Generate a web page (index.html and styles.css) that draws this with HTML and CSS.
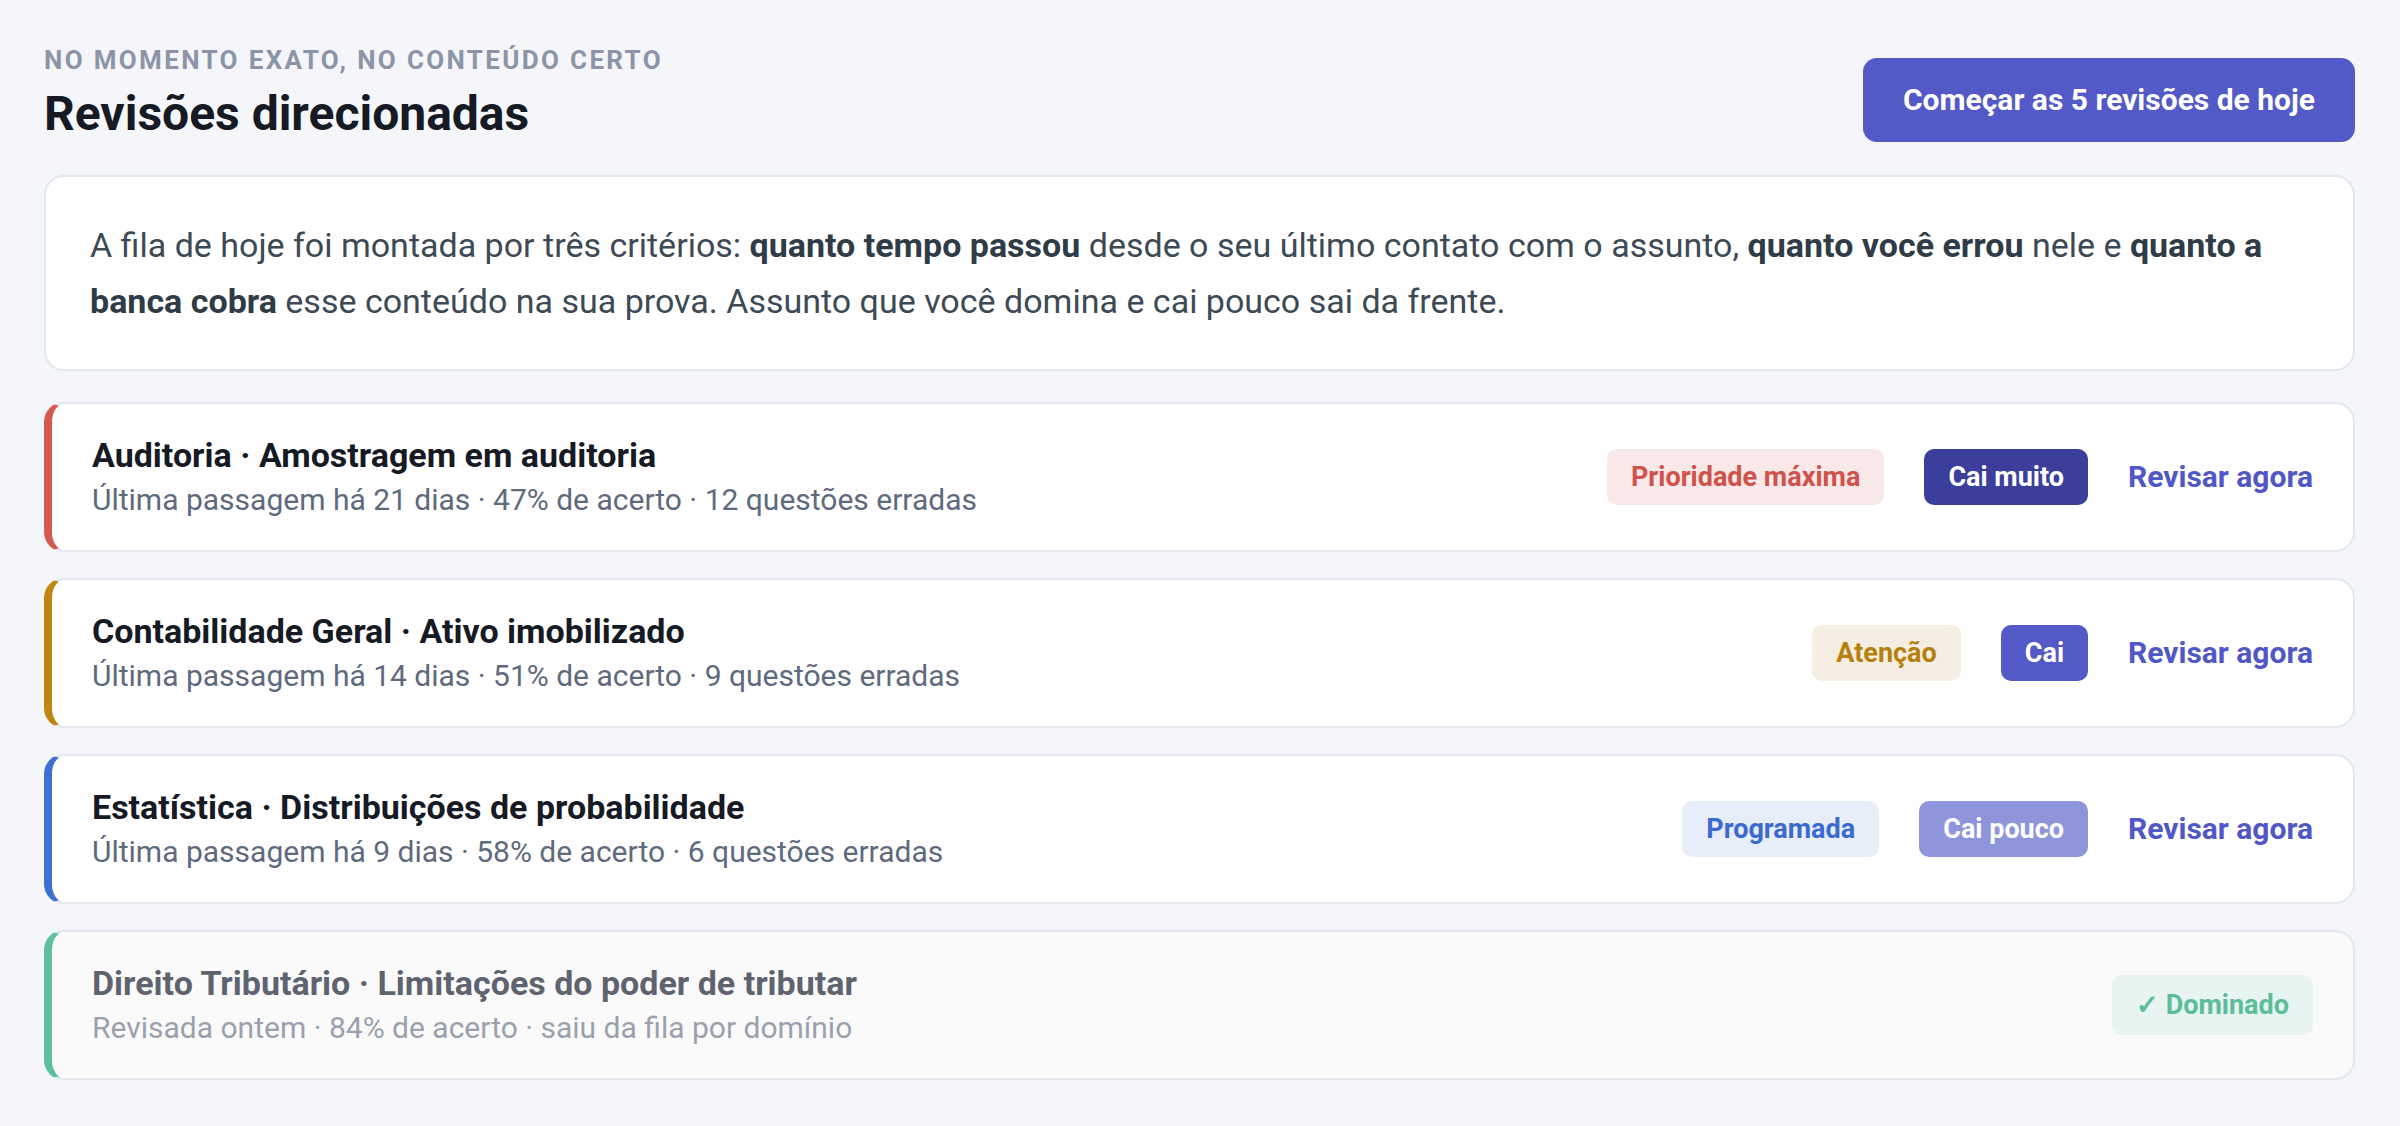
FILE: index.html
```html
<!DOCTYPE html>
<html lang="pt-BR">
<head>
    <meta charset="utf-8">
    <title>Revisões direcionadas</title>
    <link rel="stylesheet" href="styles.css">
</head>
<body>
    <div class="page">
        <header class="page-head">
            <div class="page-title">
                <p class="eyebrow">No momento exato, no conteúdo certo</p>
                <h1>Revisões direcionadas</h1>
            </div>
            <button class="start-btn" type="button">Começar as 5 revisões de hoje</button>
        </header>

        <p class="note">
            A fila de hoje foi montada por três critérios: <strong>quanto tempo passou</strong> desde o seu último contato com o assunto, <strong>quanto você errou</strong> nele e <strong>quanto a banca cobra</strong> esse conteúdo na sua prova. Assunto que você domina e cai pouco sai da frente.
        </p>

        <ul class="queue">
            <li class="review review-high">
                <div class="review-info">
                    <div class="review-title">Auditoria · Amostragem em auditoria</div>
                    <div class="review-meta">Última passagem há 21 dias · 47% de acerto · 12 questões erradas</div>
                </div>
                <div class="review-actions">
                    <span class="tag tag-high">Prioridade máxima</span>
                    <span class="chip chip-lots">Cai muito</span>
                    <a class="review-link" href="#">Revisar agora</a>
                </div>
            </li>
            <li class="review review-warn">
                <div class="review-info">
                    <div class="review-title">Contabilidade Geral · Ativo imobilizado</div>
                    <div class="review-meta">Última passagem há 14 dias · 51% de acerto · 9 questões erradas</div>
                </div>
                <div class="review-actions">
                    <span class="tag tag-warn">Atenção</span>
                    <span class="chip chip-mid">Cai</span>
                    <a class="review-link" href="#">Revisar agora</a>
                </div>
            </li>
            <li class="review review-planned">
                <div class="review-info">
                    <div class="review-title">Estatística · Distribuições de probabilidade</div>
                    <div class="review-meta">Última passagem há 9 dias · 58% de acerto · 6 questões erradas</div>
                </div>
                <div class="review-actions">
                    <span class="tag tag-planned">Programada</span>
                    <span class="chip chip-few">Cai pouco</span>
                    <a class="review-link" href="#">Revisar agora</a>
                </div>
            </li>
            <li class="review review-done">
                <div class="review-info">
                    <div class="review-title">Direito Tributário · Limitações do poder de tributar</div>
                    <div class="review-meta">Revisada ontem · 84% de acerto · saiu da fila por domínio</div>
                </div>
                <div class="review-actions">
                    <span class="tag tag-done">✓ Dominado</span>
                </div>
            </li>
        </ul>
    </div>
</body>
</html>
```

FILE: styles.css
```css
* {
    box-sizing: border-box;
}
body {
    margin: 0;
    background-color: #f5f6f9;
    font-family: Roboto, "Liberation Sans", Arial, sans-serif;
    color: #151a25;
}
.page {
    padding: 44px 45px 44px 44px;
}
.page-head {
    display: flex;
    justify-content: space-between;
    align-items: flex-end;
    margin-bottom: 33px;
}
.eyebrow {
    margin: 0;
    font-size: 26px;
    line-height: 32px;
    font-weight: 700;
    letter-spacing: 0.09em;
    text-transform: uppercase;
    color: #8b95a7;
}
.page-title h1 {
    margin: 10px 0 0;
    font-size: 48px;
    line-height: 56px;
    font-weight: 700;
    color: #151a25;
}
.start-btn {
    padding: 24px 40px;
    border: none;
    border-radius: 14px;
    background-color: #5359c6;
    color: #fff;
    font-family: inherit;
    font-size: 30px;
    line-height: 36px;
    font-weight: 700;
    cursor: pointer;
}
.note {
    margin: 0 0 31px;
    padding: 40px 44px;
    background: #fff;
    border: 2px solid #e3e8ef;
    border-radius: 20px;
    font-size: 34px;
    line-height: 56px;
    color: #3d4a55;
}
.note strong {
    color: #2f3c47;
}
.queue {
    list-style: none;
    margin: 0;
    padding: 0;
    display: flex;
    flex-direction: column;
    gap: 26px;
}
.review {
    display: flex;
    align-items: center;
    justify-content: space-between;
    padding: 30px 40px;
    background: #fff;
    border: 2px solid #e3e8ef;
    border-left: 8px solid #d35a4f;
    border-radius: 20px;
}
.review-warn {
    border-left-color: #bf8612;
}
.review-planned {
    border-left-color: #3d6fd5;
}
.review-done {
    border-left-color: #5dbf9f;
    background: #fafafb;
}
.review-title {
    font-size: 34px;
    line-height: 42px;
    font-weight: 700;
    color: #151a25;
}
.review-meta {
    margin-top: 4px;
    font-size: 30px;
    line-height: 40px;
    color: #5e6a7e;
}
.review-done .review-title {
    color: #5e646f;
}
.review-done .review-meta {
    color: #9aa1ae;
}
.review-actions {
    display: flex;
    align-items: center;
    gap: 40px;
}
.tag,
.chip {
    padding: 12px 24px;
    border-radius: 10px;
    font-size: 27px;
    line-height: 32px;
    font-weight: 700;
    white-space: nowrap;
}
.tag-high {
    background: #f9e8e8;
    color: #d0524b;
}
.tag-warn {
    background: #f6eee2;
    color: #b77f0c;
}
.tag-planned {
    background: #e7edf9;
    color: #3a6ad0;
}
.tag-done {
    padding: 14px 24px;
    background: #e8f4f1;
    color: #5bbd9b;
}
.chip {
    color: #fff;
}
.chip-lots {
    background: #3b3f9b;
}
.chip-mid {
    background: #5359c6;
}
.chip-few {
    background: #8f95db;
}
.review-link {
    font-size: 30px;
    line-height: 36px;
    font-weight: 700;
    color: #5157c6;
    text-decoration: none;
    white-space: nowrap;
}
```
